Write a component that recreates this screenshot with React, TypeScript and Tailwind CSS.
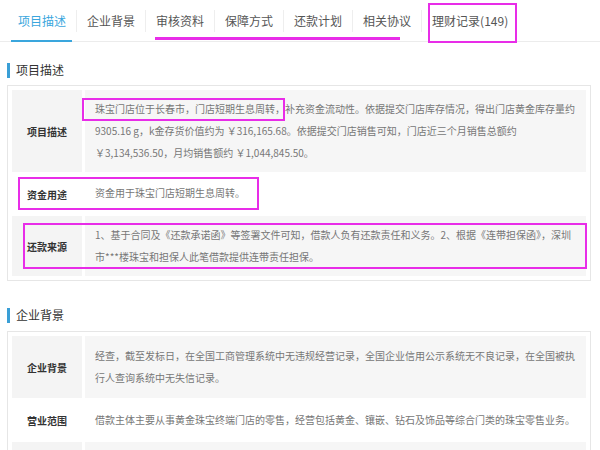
import React from "react";

const tabs = ["项目描述", "企业背景", "审核资料", "保障方式", "还款计划", "相关协议", "理财记录(149)"];

type Row = { label: string; lines: string[]; shaded: boolean };

const projectRows: Row[] = [
  {
    label: "项目描述",
    shaded: true,
    lines: [
      "珠宝门店位于长春市，门店短期生息周转，补充资金流动性。依据提交门店库存情况，得出门店黄金库存量约",
      "9305.16 g，k金存货价值约为 ￥316,165.68。依据提交门店销售可知，门店近三个月销售总额约",
      "￥3,134,536.50，月均销售额约 ￥1,044,845.50。",
    ],
  },
  { label: "资金用途", shaded: false, lines: ["资金用于珠宝门店短期生息周转。"] },
  {
    label: "还款来源",
    shaded: true,
    lines: [
      "1、基于合同及《还款承诺函》等签署文件可知，借款人负有还款责任和义务。2、根据《连带担保函》，深圳",
      "市***楼珠宝和担保人此笔借款提供连带责任担保。",
    ],
  },
];

const companyRows: Row[] = [
  {
    label: "企业背景",
    shaded: true,
    lines: [
      "经查，截至发标日，在全国工商管理系统中无违规经营记录，全国企业信用公示系统无不良记录，在全国被执",
      "行人查询系统中无失信记录。",
    ],
  },
  {
    label: "营业范围",
    shaded: false,
    lines: ["借款主体主要从事黄金珠宝终端门店的零售，经营包括黄金、镶嵌、钻石及饰品等综合门类的珠宝零售业务。"],
  },
  // next row only starts at the bottom edge of the shot
  { label: "", shaded: true, lines: [""] },
];

const SectionTitle = ({ title }: { title: string }) => (
  <div className="flex items-center h-[16px] pl-[7px]">
    <span className="w-[3px] h-[15px] bg-[#3a9fd6]" />
    <span className="ml-[6px] text-[12px] text-[#333]">{title}</span>
  </div>
);

const InfoCard = ({ rows, tight }: { rows: Row[]; tight?: boolean }) => (
  <div className="ml-[7px] mr-[9px] border border-[#e6e6e6] p-[4px] flex flex-col gap-[2px]">
    {rows.map((r, idx) => (
      <div key={idx} className="flex gap-[3px]">
        <div
          className={`w-[70px] shrink-0 flex items-center justify-center text-[10px] font-bold text-[#333] ${
            r.shaded ? "bg-[#f4f4f4]" : ""
          }`}
        >
          {r.label}
        </div>
        <div
          className={`flex-1 min-h-[40px] pl-[10px] pr-[6px] text-[10px] leading-[22px] text-[#777] whitespace-nowrap ${
            tight ? "py-[8px]" : "py-[9px]"
          } ${r.shaded ? "bg-[#f6f6f6]" : ""}`}
        >
          {r.lines.map((l, i) => (
            <div key={i}>{l}</div>
          ))}
        </div>
      </div>
    ))}
  </div>
);

export default function App() {
  return (
    <div
      className="relative w-[600px] h-[450px] overflow-hidden bg-white"
      style={{ fontFamily: '"Noto Sans CJK SC", "Noto Sans", sans-serif' }}
    >
      {/* tabs */}
      <div className="flex h-[42px] pl-[8px] border-b border-[#ececec]">
        {tabs.map((t, i) => (
          <div key={t} className="relative flex items-center">
            <div
              className={`relative h-full flex items-center px-[10px] text-[12px] ${
                i === 0 ? "text-[#3aa6dd]" : "text-[#555]"
              }`}
            >
              {t}
              {i === 0 && <span className="absolute left-[3px] right-[4px] bottom-[-1px] h-[2px] bg-[#3aa6dd]" />}
            </div>
            {i < tabs.length - 1 && <span className="w-px h-[22px] bg-[#eeeeee]" />}
          </div>
        ))}
      </div>

      <div className="mt-[20px]">
        <SectionTitle title="项目描述" />
      </div>
      <div className="mt-[7px]">
        <InfoCard rows={projectRows} tight />
      </div>

      <div className="mt-[26px]">
        <SectionTitle title="企业背景" />
      </div>
      <div className="mt-[8px]">
        <InfoCard rows={companyRows} />
      </div>

      {/* magenta annotations */}
      <div className="absolute left-[155px] top-[37px] w-[245px] h-[3px] bg-[#e82de8]" />
      <div className="absolute left-[428px] top-[3px] w-[89px] h-[40px] border-2 border-[#e82de8]" />
      <div className="absolute left-[82px] top-[98px] w-[203px] h-[23px] border-2 border-[#e82de8]" />
      <div className="absolute left-[18px] top-[177px] w-[241px] h-[33px] border-2 border-[#e82de8]" />
      <div className="absolute left-[23px] top-[223px] w-[564px] h-[46px] border-2 border-[#e82de8]" />
    </div>
  );
}
